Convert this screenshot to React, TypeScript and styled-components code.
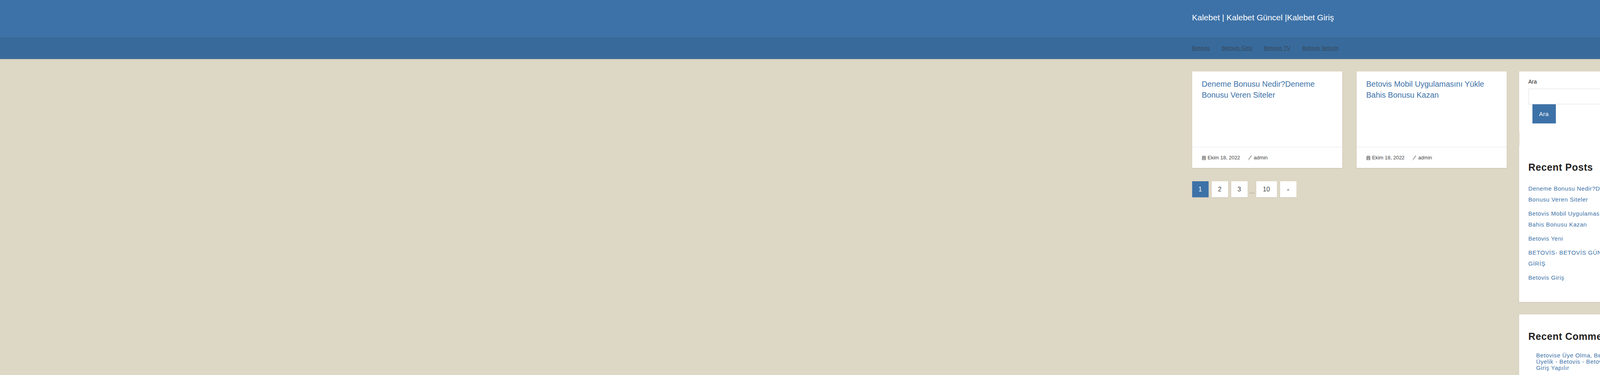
import React from "react";
import styled, { createGlobalStyle } from "styled-components";

const Global = createGlobalStyle`
  html, body { margin: 0; padding: 0; }
  html { min-width: 7250px; }
  body { background: #ddd7c5; font-family: "Liberation Sans", Arial, sans-serif; color: #444; min-height: 960px; }
  a { color: #3d72a8; text-decoration: none; }
`;

const TitleBar = styled.header`
  background: #3d72a8;
  height: 94px;
  border-bottom: 1px solid #4679ad;
`;
const NavBar = styled.nav`
  background: #386b9c;
  height: 56px;
  box-shadow: 0 1px 2px rgba(0,0,0,0.15);
`;
const Wrap = styled.div`
  width: 1147px;
  margin: 0 auto;
  height: 100%;
  display: flex;
  align-items: center;
`;
const SiteTitle = styled.div`
  color: #fff;
  font-size: 21px;
  padding-bottom: 4px;
`;
const NavLink = styled.a`
  color: #37475a !important;
  font-size: 14px;
  text-decoration: underline !important;
  margin-right: 30px;
`;
const Row = styled.div`
  width: 1147px;
  margin: 32px auto 0;
  display: flex;
  align-items: flex-start;
`;
const Main = styled.main`
  width: 804px;
  flex-shrink: 0;
`;
const Grid = styled.div<{ $cols: number }>`
  display: grid;
  grid-template-columns: repeat(${p => p.$cols}, 384px);
  column-gap: 37px;
`;
const Extra = styled.div`
  margin-left: 111px;
  flex-shrink: 0;
`;
const Card = styled.article`
  background: #fff;
  height: 247px;
  display: flex;
  flex-direction: column;
  box-shadow: 0 1px 2px rgba(0,0,0,0.12);
`;
const CardBody = styled.div`
  flex: 1;
  padding: 18px 25px 0;
`;
const CardTitle = styled.a`
  display: block;
  font-size: 20px;
  line-height: 28px;
`;
const Excerpt = styled.p`
  margin: 9px 0 0;
  font-size: 15.5px;
  line-height: 28px;
  color: #444;
`;
const CardFoot = styled.div`
  height: 53px;
  border-top: 1px solid #e4e4e4;
  padding: 0 25px;
  display: flex;
  align-items: center;
  gap: 20px;
  font-size: 13px;
  color: #444;
`;
const Meta = styled.span`
  display: flex;
  align-items: center;
  gap: 5px;
`;
const Pager = styled.div`
  margin-top: 34px;
  display: flex;
  gap: 8px;
  align-items: center;
`;
const PageBtn = styled.span<{ $active?: boolean; $w?: number; $small?: boolean }>`
  width: ${p => p.$w ?? 42}px;
  height: 41px;
  display: flex;
  align-items: center;
  justify-content: center;
  font-size: ${p => (p.$small ? 11 : 16)}px;
  background: ${p => (p.$active ? "#3d72a8" : "#fff")};
  color: ${p => (p.$active ? "#fff" : "#444")};
  box-shadow: 0 1px 2px rgba(0,0,0,0.1);
`;
const Dots = styled.span`
  font-size: 14px;
  color: #666;
  margin: 0 -4px;
  padding-top: 10px;
`;
const Sidebar = styled.aside`
  width: 310px;
  margin-left: 33px;
  flex-shrink: 0;
  display: flex;
  flex-direction: column;
`;
const Widget = styled.section<{ $mt?: number; $h?: number }>`
  background: #fff;
  padding: 18px 24px 24px;
  margin-top: ${p => p.$mt ?? 0}px;
  min-height: ${p => p.$h ?? 0}px;
  box-sizing: border-box;
  box-shadow: 0 1px 2px rgba(0,0,0,0.1);
`;
const Strip = styled.div`
  background: #fff;
  width: 265px;
  height: 32px;
  margin-left: 1px;
`;
const Label = styled.div`
  font-size: 14px;
  color: #222;
  line-height: 16px;
`;
const Input = styled.div`
  margin-top: 10px;
  width: 252px;
  height: 40px;
  border: 1px solid #ddd;
  box-sizing: border-box;
`;
const Button = styled.div`
  margin-left: 10px;
  width: 60px;
  height: 49px;
  background: #3d72a8;
  color: #fff;
  font-size: 15px;
  letter-spacing: 0.5px;
  display: flex;
  align-items: center;
  justify-content: center;
`;
const WTitle = styled.h2`
  margin: 24px 0 26px;
  font-size: 25px;
  font-weight: bold;
  color: #222;
  letter-spacing: 0.6px;
`;
const PostList = styled.ul`
  list-style: none;
  margin: 0;
  padding: 0;
  display: flex;
  flex-direction: column;
  gap: 8px;
`;
const PostItem = styled.li`
  font-size: 15px;
  line-height: 28px;
  letter-spacing: 0.6px;
`;
const CommentList = styled.ul`
  margin: 0;
  padding-left: 20px;
  list-style: none;
  font-size: 15px;
  line-height: 16px;
  letter-spacing: 0.6px;
  width: 230px;
`;

const CalIcon = () => (
  <svg width="10" height="12" viewBox="0 0 10 12">
    <rect x="0" y="1.5" width="10" height="10.5" rx="1.5" fill="#999" />
    <rect x="2" y="0" width="1.5" height="3" fill="#999" />
    <rect x="6.5" y="0" width="1.5" height="3" fill="#999" />
    <text x="5" y="10.5" fontSize="7" fill="#fff" textAnchor="middle" fontFamily="Liberation Sans">1</text>
  </svg>
);
const PenIcon = () => (
  <svg width="10" height="14" viewBox="0 0 10 14">
    <path d="M8 0.5 L9.5 2 L3 11 L1 12.5 L1.3 10 Z" fill="#999" />
    <path d="M0.5 13.5 L2 12" stroke="#999" strokeWidth="1" />
  </svg>
);

type Post = { title: string; excerpt?: string };

const PostCard = ({ p }: { p: Post }) => (
  <Card>
    <CardBody>
      <CardTitle href="#">{p.title}</CardTitle>
      {p.excerpt && <Excerpt>{p.excerpt}</Excerpt>}
    </CardBody>
    <CardFoot>
      <Meta><CalIcon />Ekim 18, 2022</Meta>
      <Meta><PenIcon />admin</Meta>
    </CardFoot>
  </Card>
);

const mainPosts: Post[] = [
  { title: "Deneme Bonusu Nedir?Deneme Bonusu Veren Siteler" },
  { title: "Betovis Mobil Uygulamasını Yükle Bahis Bonusu Kazan" },
];
const extraPosts: Post[] = [
  { title: "BETOVİS- BETOVİS GÜNCEL GİRİŞ", excerpt: "Türk Casino ve Bahis oyuncularının arayış içerisinde olduğu bir konu olan; güvenilir ve hızlı bahis sitelerinden olan Betovis,Online Casino ve ..." },
  { title: "Betovis Giriş", excerpt: "Kaliteli ve Güvenilir zaman geçirilebilecek Online Casino sitesi bulmak oldukça zorlaştı. Özellikle evlerde daha çok vakit geçirdiğimiz bu günlerde, Hem ..." },
  { title: "BETOVİS GÜNCEL GİRİŞ", excerpt: "Betovis Online Casino ve Bahis sitesi; 4 yıldır kullanıcılarına profesyonel hızlı ve güvenilir bir şekilde hizmet etmektedir. Özellikle çekim hızları ..." },
  { title: "BETOVİS SKOR TAHMİN ETKİNLİĞİ" },
  { title: "Bedava Maç İzle", excerpt: "Günümüzde her şeyin para olduğunu düşünen ve adeta paraya tapan insanlar var olmaktadır. Bu durum ise her geçen gün karşımıza ..." },
  { title: "Canlı Maç İzle", excerpt: "Canlı maç izle denildiğinde akıllara belli başlı siteler ve platformlar gelmektedir. Günümüzde oldukça popüler olan bir kategori olarak canlı maç ..." },
  { title: "Bahis Sitelerinden Nasıl Para Çekilir", excerpt: "Bahis sitelerinden para çekmek bahis sitelerine yatırım yapan kişiler için dikkat edilecek en önemli noktalardan biridir. Öncelikli olarak yatırım yapılacak ..." },
];
const recent = [
  "Deneme Bonusu Nedir?Deneme Bonusu Veren Siteler",
  "Betovis Mobil Uygulamasını Yükle Bahis Bonusu Kazan",
  "Betovis Yeni",
  "BETOVİS- BETOVİS GÜNCEL GİRİŞ",
  "Betovis Giriş",
];

export default function App() {
  return (
    <>
      <Global />
      <TitleBar>
        <Wrap><SiteTitle>Kalebet | Kalebet Güncel |Kalebet Giriş</SiteTitle></Wrap>
      </TitleBar>
      <NavBar>
        <Wrap>
          {["Betovis", "Betovis Giriş", "Betovis TV", "Betovis İletişim"].map(n => (
            <NavLink key={n} href="#">{n}</NavLink>
          ))}
        </Wrap>
      </NavBar>
      <Row>
        <Main>
          <Grid $cols={2}>
            {mainPosts.map(p => <PostCard key={p.title} p={p} />)}
          </Grid>
          <Pager>
            <PageBtn $active>1</PageBtn>
            <PageBtn>2</PageBtn>
            <PageBtn>3</PageBtn>
            <Dots>…</Dots>
            <PageBtn $w={53}>10</PageBtn>
            <PageBtn $small>»</PageBtn>
          </Pager>
        </Main>
        <Sidebar>
          <Widget $h={156}>
            <Label>Ara</Label>
            <Input />
            <Button>Ara</Button>
          </Widget>
          <Strip />
          <Widget $h={401}>
            <WTitle>Recent Posts</WTitle>
            <PostList>
              {recent.map(r => <PostItem key={r}><a href="#">{r}</a></PostItem>)}
            </PostList>
          </Widget>
          <Widget $mt={32} $h={200}>
            <WTitle>Recent Comments</WTitle>
            <CommentList>
              <li><a href="#">Betovise Üye Olma, Betovis Üyelik - Betovis - Betovis Nasıl Giriş Yapılır</a></li>
            </CommentList>
          </Widget>
        </Sidebar>
        <Extra>
          <Grid $cols={7}>
            {extraPosts.map(p => <PostCard key={p.title} p={p} />)}
          </Grid>
        </Extra>
      </Row>
    </>
  );
}
